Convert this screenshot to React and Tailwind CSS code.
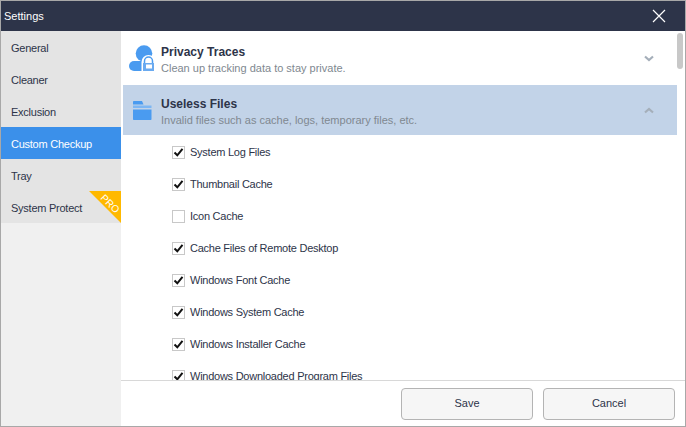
import React from 'react'

const font = "font-['Liberation_Sans',sans-serif]"

const navItems = ['General', 'Cleaner', 'Exclusion', 'Custom Checkup', 'Tray', 'System Protect']

const checks = [
  { label: 'System Log Files', on: true },
  { label: 'Thumbnail Cache', on: true },
  { label: 'Icon Cache', on: false },
  { label: 'Cache Files of Remote Desktop', on: true },
  { label: 'Windows Font Cache', on: true },
  { label: 'Windows System Cache', on: true },
  { label: 'Windows Installer Cache', on: true },
  { label: 'Windows Downloaded Program Files', on: true },
]

const PrivacyIcon = () => (
  <svg width="26" height="26" viewBox="0 0 26 26" className="shrink-0">
    <circle cx="15" cy="8.500" r="8.300" fill="#4a9bf0" />
    <path d="M5 16h10v10H5a5 5 0 0 1 0-10z" fill="#4a9bf0" />
    {/* white gap round the lock */}
    <path d="M12.500 26V17a7 7 0 0 1 14 0v9z" fill="#fff" />
    <path d="M15.500 18v-2a4 4 0 0 1 8 0v2" fill="none" stroke="#4a9bf0" strokeWidth="1.500" />
    <path d="M14 18h11v8H14z" fill="#6aaaf0" />
    <path d="M17 19.500h6v4h-6z" fill="#fff" />
  </svg>
)

const FolderIcon = () => (
  <svg width="19" height="19" viewBox="0 0 19 19" className="shrink-0">
    <path d="M0 1c0-.5.4-1 1-1h8l1.500 3.500H0z" fill="#4a9bf0" />
    <path d="M0 4.500h18.500v2.500H0z" fill="#7db6f3" />
    <path d="M0 8.500h18.500V18c0 .6-.4 1-1 1H1c-.6 0-1-.4-1-1z" fill="#4a9bf0" />
  </svg>
)

const Chevron = ({ up }) => (
  <svg width="10" height="7" viewBox="0 0 10 7" className="shrink-0">
    <path d={up ? 'M1 5.500l4-3.500 4 3.500' : 'M1 1.500l4 3.500 4-3.500'} fill="none" stroke="#a5afba" strokeWidth="2.200" />
  </svg>
)

const Checkbox = ({ on }) => (
  <span className="w-[13px] h-[13px] border border-[#c8c8c8] bg-white flex items-center justify-center shrink-0">
    {on && (
      <svg width="11" height="11" viewBox="0 0 11 11">
        <path d="M1.500 5.500l2.800 2.800L9.500 1.800" fill="none" stroke="#111" strokeWidth="2" />
      </svg>
    )}
  </span>
)

export default function App() {
  return (
    <div className={`w-[686px] h-[427px] flex flex-col bg-white border border-[#a8a8a8] overflow-hidden ${font}`}>
      {/* title bar */}
      <div className="h-[30px] shrink-0 bg-[#2d3449] flex items-center justify-between pl-[3px] pr-[19px] text-white text-[11px]">
        <span>Settings</span>
        <svg width="14" height="14" viewBox="0 0 14 14">
          <path d="M1 1l12 12M13 1L1 13" stroke="#fff" strokeWidth="1.200" />
        </svg>
      </div>

      <div className="flex-1 flex min-h-0">
        {/* sidebar */}
        <div className="w-[120px] shrink-0 bg-[#f0f0f0]">
          {navItems.map((item) => (
            <div
              key={item}
              className={`relative h-[32px] flex items-center pl-[10px] pt-[2px] text-[11px] tracking-[-0.25px] ${
                item === 'Custom Checkup' ? 'bg-[#3b90ea] text-white' : 'bg-[#e4e4e4] text-[#2d3449]'
              }`}
            >
              {item}
              {item === 'System Protect' && (
                <div className="absolute top-0 right-0 w-[32px] h-[32px] overflow-hidden bg-[#ffb900] [clip-path:polygon(0_0,100%_0,100%_100%)]">
                  <span className="absolute top-[8px] right-[0px] text-white text-[10px] tracking-normal leading-none rotate-45">PRO</span>
                </div>
              )}
            </div>
          ))}
        </div>

        {/* content */}
        <div className="flex-1 flex flex-col min-w-0">
          <div className="flex-1 flex min-h-0">
            <div className="flex-1 min-w-0 overflow-hidden pl-[2px]">
              <div className="h-[54px] flex items-center pl-[6px] pr-[23px]">
                <PrivacyIcon />
                <div className="ml-[6px] flex-1 pt-[5px]">
                  <div className="text-[12px] leading-[15px] font-bold text-[#2d3449]">Privacy Traces</div>
                  <div className="text-[11px] leading-[17px] text-[#808890]">Clean up tracking data to stay private.</div>
                </div>
                <Chevron />
              </div>
              <div className="h-[50px] flex items-center bg-[#c2d3e8] pl-[10px] pr-[23px]">
                <FolderIcon />
                <div className="ml-[9px] flex-1 pt-[5px]">
                  <div className="text-[12px] leading-[15px] font-bold text-[#2d3449]">Useless Files</div>
                  <div className="text-[11px] leading-[17px] text-[#808890]">Invalid files such as cache, logs, temporary files, etc.</div>
                </div>
                <Chevron up />
              </div>
              <div className="pl-[49px] pt-[1px]">
                {checks.map((c) => (
                  <div key={c.label} className="h-[32px] flex items-center gap-[5px] text-[11px] tracking-[-0.25px] text-[#2d3449] whitespace-nowrap">
                    <Checkbox on={c.on} />
                    <span>{c.label}</span>
                  </div>
                ))}
              </div>
            </div>
            {/* scrollbar */}
            <div className="w-[8px] shrink-0 pt-[2px]">
              <div className="w-[6px] h-[36px] rounded-full bg-[#c8c8c8]" />
            </div>
          </div>

          {/* footer */}
          <div className="h-[46px] shrink-0 border-t border-[#d8d8d8] bg-white flex items-center justify-end gap-[10px] pr-[10px]">
            <button className="w-[132px] h-[32px] rounded-[4px] border border-[#b4b4b4] bg-[#f6f6f6] text-[11px] text-[#2d3449]">Save</button>
            <button className="w-[132px] h-[32px] rounded-[4px] border border-[#b4b4b4] bg-[#f6f6f6] text-[11px] text-[#2d3449]">Cancel</button>
          </div>
        </div>
      </div>
    </div>
  )
}
